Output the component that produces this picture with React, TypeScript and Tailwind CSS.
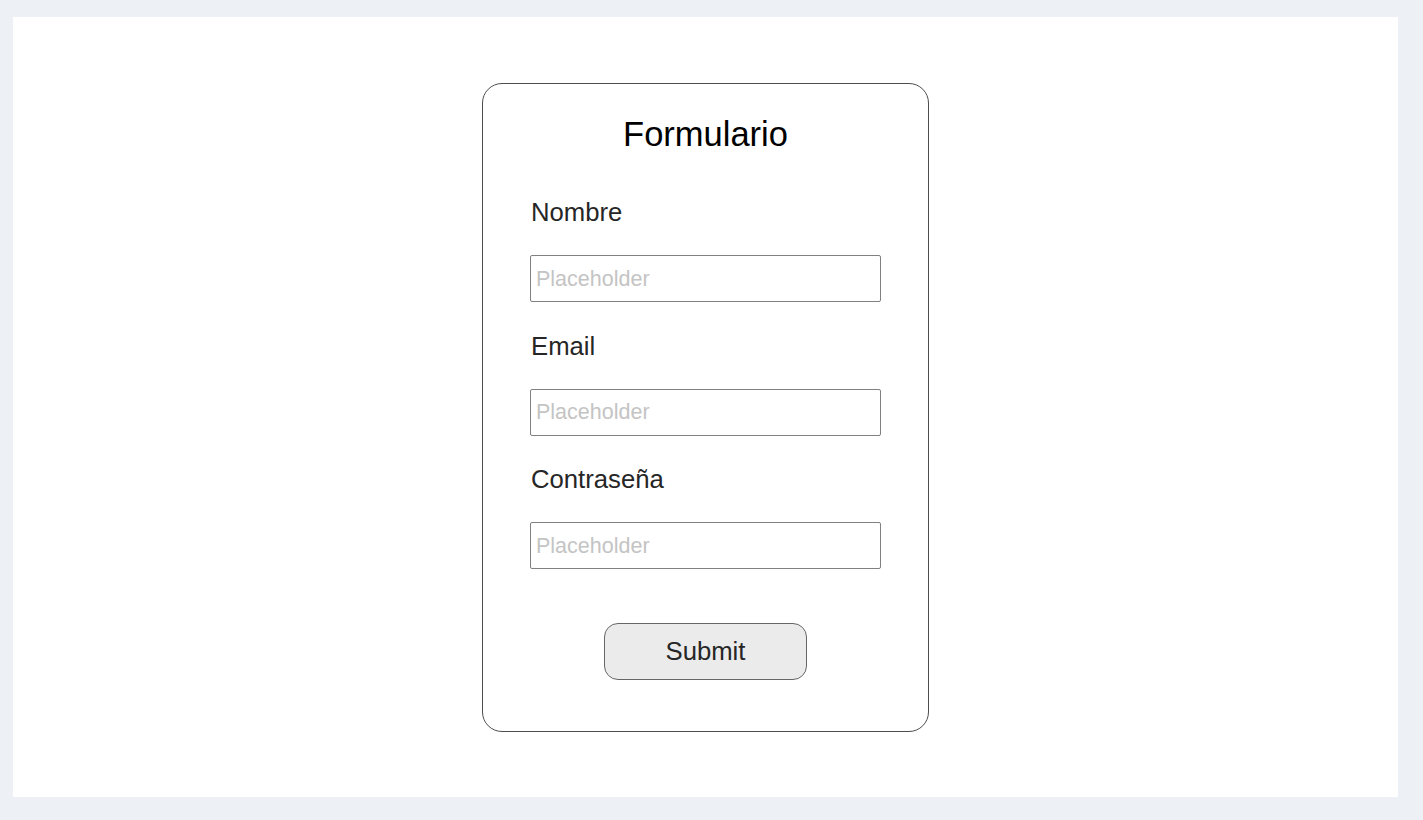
const fields = [
  { id: "nombre", label: "Nombre" },
  { id: "email", label: "Email" },
  { id: "password", label: "Contraseña" },
];

export default function App() {
  return (
    <div className="w-full h-[820px] bg-[#edf0f5] pt-[17px] pl-[13px] font-['Liberation_Sans',Arial,sans-serif]">
      <div className="w-[1385px] h-[780px] bg-white flex justify-center pt-[66px]">
        <div className="w-[447px] h-[649px] border border-[#4d4d4d] rounded-[20px] flex flex-col pt-[30px] px-[47px]">
          <h1 className="text-center text-[34.5px] leading-[40px] text-black">Formulario</h1>
          <div className="flex flex-col mt-[41px]">
            {fields.map((f, i) => (
              <div key={f.id} className={i > 0 ? "mt-[26.5px]" : ""}>
                <label htmlFor={f.id} className="block pt-[2px] text-[25.7px] leading-[30px] text-[#262626] pl-px">
                  {f.label}
                </label>
                <input
                  id={f.id}
                  type="text"
                  placeholder="Placeholder"
                  className="mt-[28px] block w-[351px] h-[47px] border border-[#808080] rounded-[2px] px-[5px] pt-px text-[21.5px] text-[#333] placeholder:text-[#c4c4c4] outline-none"
                />
              </div>
            ))}
          </div>
          <div className="flex justify-center mt-[54px]">
            <button className="w-[203px] h-[57px] rounded-[14px] border border-[#666] bg-[#ebebeb] text-[25.7px] text-[#262626]">
              Submit
            </button>
          </div>
        </div>
      </div>
    </div>
  );
}
